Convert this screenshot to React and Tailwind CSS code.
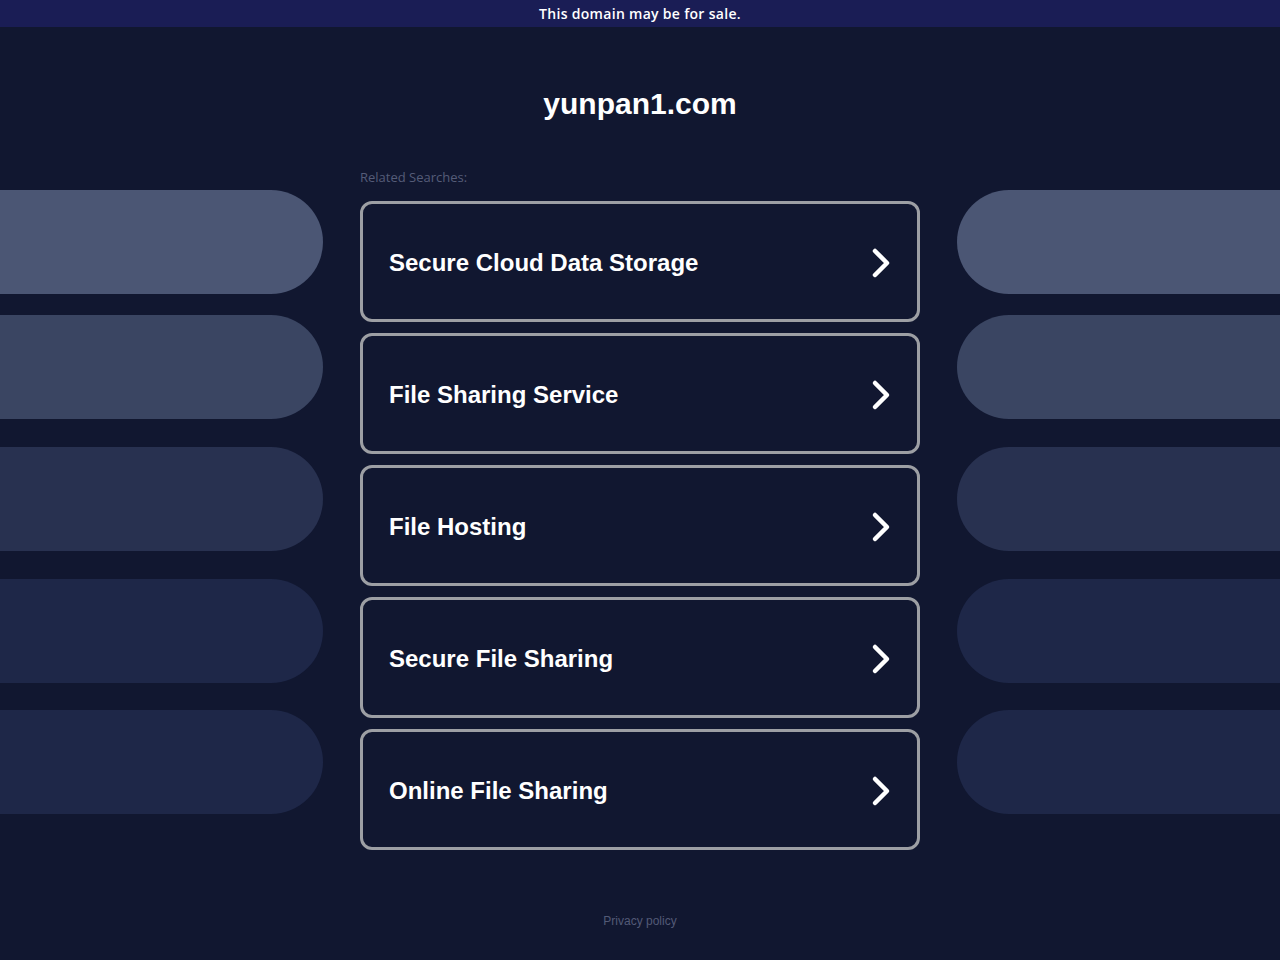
import React from "react";

const searches = [
  "Secure Cloud Data Storage",
  "File Sharing Service",
  "File Hosting",
  "Secure File Sharing",
  "Online File Sharing",
];

const pills = [
  { color: "bg-[#4b5674]", mt: "mt-0" },
  { color: "bg-[#3a4562]", mt: "mt-[21px]" },
  { color: "bg-[#283150]", mt: "mt-[28px]" },
  { color: "bg-[#1e2748]", mt: "mt-[28px]" },
  { color: "bg-[#1e2748]", mt: "mt-[27px]" },
];

const Chevron = () => (
  <svg width="22" height="32" viewBox="0 0 22 32" className="shrink-0">
    <polyline
      points="5,4 17,16 5,28"
      fill="none"
      stroke="white"
      strokeWidth="4.5"
      strokeLinecap="round"
      strokeLinejoin="round"
    />
  </svg>
);

const SideColumn = ({ side }) => (
  <div className="flex flex-col pt-[163px] w-[323px] shrink-0">
    {pills.map((p, i) => (
      <div
        key={i}
        className={
          p.color +
          " " +
          p.mt +
          " h-[104px] w-full " +
          (side === "left" ? "rounded-r-[52px]" : "rounded-l-[52px]")
        }
      />
    ))}
  </div>
);

const App = () => {
  return (
    <div className="min-h-screen bg-[#111730] flex flex-col">
      <div className="h-[27px] bg-[#1a1d55] flex items-center justify-center">
        <p className="text-white text-[14px] font-semibold tracking-[0.3px] [font-family:'Open_Sans',sans-serif]">
          This domain may be for sale.
        </p>
      </div>
      <div className="flex justify-between">
        <SideColumn side="left" />
        <div className="w-[560px] flex flex-col">
          <h1 className="mt-[59px] text-center text-white font-bold text-[30px] leading-[36px] [font-family:'Liberation_Sans',Arial,sans-serif]">
            yunpan1.com
          </h1>
          <p className="mt-[47px] text-[13px] leading-4 text-[#555c78] [font-family:'Open_Sans',sans-serif]">
            Related Searches:
          </p>
          <div className="mt-[16px] flex flex-col gap-[11px]">
            {searches.map((s) => (
              <div
                key={s}
                className="h-[121px] border-[3px] border-[#9d9fa4] rounded-[12px] flex items-center justify-between pl-[26px] pr-[25px] pt-[2px]"
              >
                <span className="text-white font-bold text-[24px] [font-family:'Liberation_Sans',Arial,sans-serif]">
                  {s}
                </span>
                <Chevron />
              </div>
            ))}
          </div>
          <p className="mt-[63px] mb-8 text-center text-[12px] leading-4 text-[#535a76] [font-family:'Liberation_Sans',Arial,sans-serif]">
            Privacy policy
          </p>
        </div>
        <SideColumn side="right" />
      </div>
    </div>
  );
};

export default App;
